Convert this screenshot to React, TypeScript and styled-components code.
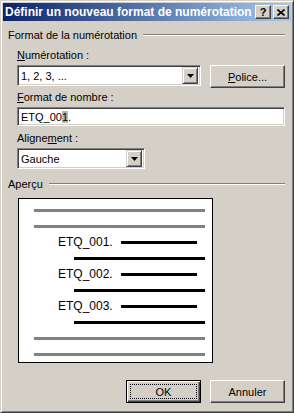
import styled, { createGlobalStyle } from 'styled-components';

const GlobalStyle = createGlobalStyle`
  html, body {
    margin: 0;
    padding: 0;
    background: #d4d0c8;
  }
  body {
    font-family: 'Liberation Sans', Arial, sans-serif;
    font-size: 11px;
    color: #000;
  }
`;

const Window = styled.div`
  box-sizing: border-box;
  width: 294px;
  height: 413px;
  background: #d4d0c8;
  border: 1px solid;
  border-color: #d4d0c8 #404040 #404040 #d4d0c8;
  box-shadow: inset 1px 1px #fff, inset -1px -1px #808080;
  padding: 2px;
  display: flex;
  flex-direction: column;
`;

const TitleBar = styled.div`
  height: 18px;
  display: flex;
  align-items: center;
  padding: 0 2px 0 2px;
  background: linear-gradient(to right, #0a246a, #a6caf0);
  color: #fff;
  font-weight: bold;
  font-size: 12px;
`;

const Title = styled.div`
  flex: 1;
  white-space: nowrap;
  overflow: hidden;
`;

const CaptionButton = styled.div`
  box-sizing: border-box;
  width: 16px;
  height: 14px;
  margin-left: 2px;
  background: #d4d0c8;
  border: 1px solid;
  border-color: #fff #404040 #404040 #fff;
  box-shadow: inset -1px -1px #808080;
  color: #000;
  display: flex;
  align-items: center;
  justify-content: center;
  font-weight: bold;
  font-size: 11px;
  line-height: 1;
`;

const Body = styled.div`
  flex: 1;
  display: flex;
  flex-direction: column;
  padding: 7px 6px 0 5px;
`;

const GroupHeader = styled.div<{ $top?: number }>`
  display: flex;
  align-items: center;
  height: 13px;
  gap: 6px;
  margin-top: ${(p) => p.$top || 0}px;
  &::after {
    content: '';
    flex: 1;
    height: 1px;
    background: #808080;
    border-bottom: 1px solid #fff;
  }
`;

const Group = styled.div`
  display: flex;
  flex-direction: column;
  padding-left: 9px;
`;

const Label = styled.div<{ $top: number }>`
  height: 13px;
  line-height: 13px;
  margin-top: ${(p) => p.$top}px;
  margin-bottom: 3px;
`;

const Row = styled.div`
  display: flex;
  align-items: flex-start;
  gap: 9px;
`;

const Sunken = styled.div<{ $width?: number }>`
  box-sizing: border-box;
  width: ${(p) => (p.$width ? `${p.$width}px` : 'auto')};
  background: #fff;
  border: 1px solid;
  border-color: #808080 #fff #fff #808080;
  box-shadow: inset 1px 1px #404040, inset -1px -1px #d4d0c8;
  display: flex;
  align-items: center;
`;

const Select = styled(Sunken)`
  height: 21px;
  padding: 2px;
`;

const SelectText = styled.div`
  flex: 1;
  padding-left: 1px;
`;

const ArrowButton = styled.div`
  box-sizing: border-box;
  width: 16px;
  height: 17px;
  background: #d4d0c8;
  border: 1px solid;
  border-color: #d4d0c8 #404040 #404040 #d4d0c8;
  box-shadow: inset 1px 1px #fff, inset -1px -1px #808080;
  display: flex;
  align-items: center;
  justify-content: center;
`;

const Input = styled(Sunken)`
  height: 19px;
  padding: 0 3px;
`;

const Highlight = styled.span`
  background: #b4b4b4;
`;

const Button = styled.div<{ $default?: boolean }>`
  box-sizing: border-box;
  width: 75px;
  height: 23px;
  background: #d4d0c8;
  border: 1px solid;
  border-color: ${(p) => (p.$default ? '#000' : '#fff #404040 #404040 #fff')};
  box-shadow: ${(p) =>
    p.$default
      ? 'inset 1px 1px #fff, inset -1px -1px #404040, inset -2px -2px #808080'
      : 'inset -1px -1px #808080'};
  display: flex;
  align-items: center;
  justify-content: center;
  padding: ${(p) => (p.$default ? '3px' : '0')};
`;

const FocusRect = styled.div`
  flex: 1;
  align-self: stretch;
  border: 1px dotted #000;
  display: flex;
  align-items: center;
  justify-content: center;
`;

const Preview = styled.div`
  box-sizing: border-box;
  width: 195px;
  height: 165px;
  margin: 8px 0 0 10px;
  background: #fff;
  border: 1px solid #000;
  padding: 3px 7px 0 15px;
  display: flex;
  flex-direction: column;
`;

const PreviewRow = styled.div<{ $indent: number }>`
  height: 16px;
  display: flex;
  align-items: center;
  padding-left: ${(p) => p.$indent}px;
  gap: 8px;
`;

const Bar = styled.div<{ $gray?: boolean; $trim?: number }>`
  flex: 1;
  height: 3px;
  margin-right: ${(p) => p.$trim || 0}px;
  background: ${(p) => (p.$gray ? '#808080' : '#000')};
`;

const PreviewText = styled.span`
  font-size: 12px;
`;

const Footer = styled.div`
  display: flex;
  justify-content: flex-end;
  gap: 9px;
  margin-top: 17px;
`;

function Arrow() {
  return (
    <svg width="7" height="4" viewBox="0 0 7 4">
      <path d="M0 0h7L3.5 4z" fill="#000" />
    </svg>
  );
}

function CloseGlyph() {
  return (
    <svg width="8" height="7" viewBox="0 0 8 7">
      <path d="M0.5 0.5l7 6M7.5 0.5l-7 6" stroke="#000" strokeWidth="1.6" />
    </svg>
  );
}

const items = ['ETQ_001.', 'ETQ_002.', 'ETQ_003.'];

export default function App() {
  return (
    <>
      <GlobalStyle />
      <Window>
        <TitleBar>
          <Title>Définir un nouveau format de numérotation</Title>
          <CaptionButton>?</CaptionButton>
          <CaptionButton>
            <CloseGlyph />
          </CaptionButton>
        </TitleBar>
        <Body>
          <GroupHeader>Format de la numérotation</GroupHeader>
          <Group>
            <Label $top={8}>
              <u>N</u>umérotation :
            </Label>
            <Row>
              <Select $width={184}>
                <SelectText>1, 2, 3, ...</SelectText>
                <ArrowButton>
                  <Arrow />
                </ArrowButton>
              </Select>
              <Button>
                <span>
                  <u>P</u>olice...
                </span>
              </Button>
            </Row>
            <Label $top={3}>
              <u>F</u>ormat de nombre :
            </Label>
            <Input>
              ETQ_00<Highlight>1</Highlight>.
            </Input>
            <Label $top={6}>
              Aligne<u>m</u>ent :
            </Label>
            <Select $width={128}>
              <SelectText>Gauche</SelectText>
              <ArrowButton>
                <Arrow />
              </ArrowButton>
            </Select>
          </Group>
          <GroupHeader $top={8}>Aperçu</GroupHeader>
          <Preview>
            <PreviewRow $indent={0}>
              <Bar $gray />
            </PreviewRow>
            <PreviewRow $indent={0}>
              <Bar $gray />
            </PreviewRow>
            {items.map((t) => (
              <div key={t}>
                <PreviewRow $indent={24}>
                  <PreviewText>{t}</PreviewText>
                  <Bar $trim={8} />
                </PreviewRow>
                <PreviewRow $indent={40}>
                  <Bar />
                </PreviewRow>
              </div>
            ))}
            <PreviewRow $indent={0}>
              <Bar $gray />
            </PreviewRow>
            <PreviewRow $indent={0}>
              <Bar $gray />
            </PreviewRow>
          </Preview>
          <Footer>
            <Button $default>
              <FocusRect>OK</FocusRect>
            </Button>
            <Button>Annuler</Button>
          </Footer>
        </Body>
      </Window>
    </>
  );
}
